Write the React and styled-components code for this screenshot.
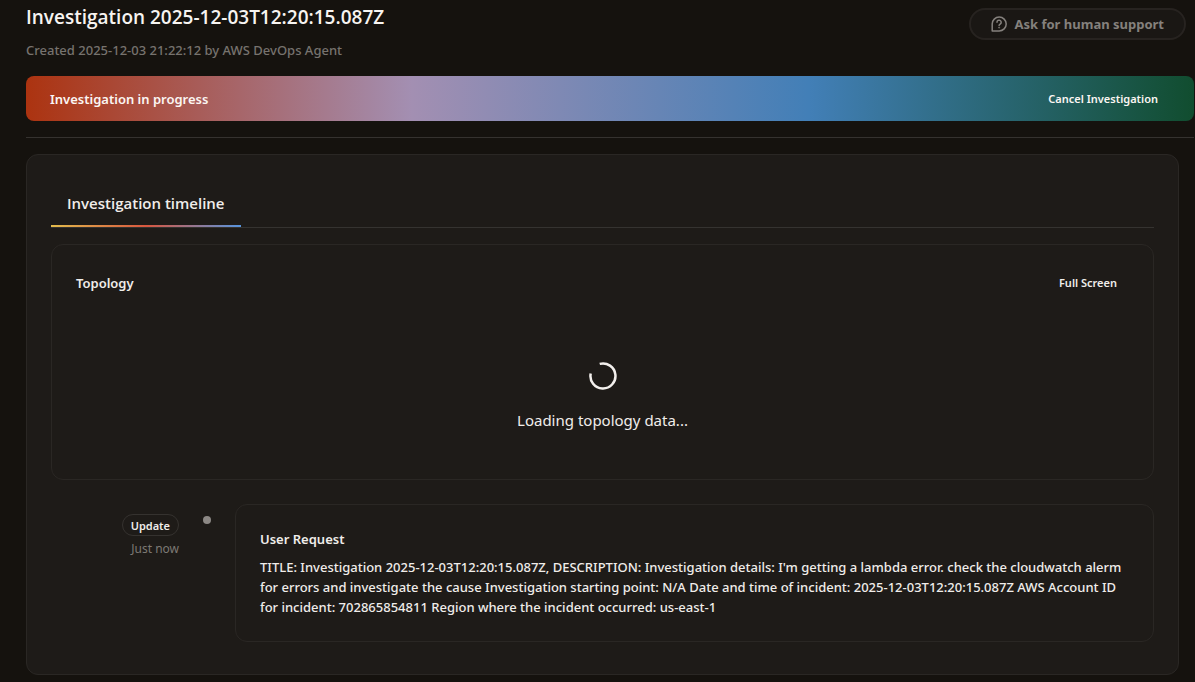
import React from "react";
import styled, { createGlobalStyle } from "styled-components";

const GlobalStyle = createGlobalStyle`
  *, *::before, *::after { box-sizing: border-box; }
  html { background: #15120e; }
  body {
    margin: 0;
    color: #f0edea;
    font-family: "Segoe UI", "Noto Sans", "Open Sans", sans-serif;
    font-size: 13px;
    line-height: 20px;
  }
  h1, h2, h3, p { margin: 0; }
  button {
    padding: 0;
    border: 0;
    background: none;
    color: inherit;
    font: inherit;
    cursor: pointer;
  }
`;

const Page = styled.main`
  padding: 4px 1px 6px 26px;
`;

const Header = styled.header`
  display: flex;
  justify-content: space-between;
  align-items: flex-start;
  padding: 0 8px 16px 0;
`;

const Heading = styled.div`
  display: flex;
  flex-direction: column;
  gap: 10px;
`;

const Title = styled.h1`
  font-family: "Open Sans", "Noto Sans", sans-serif;
  font-size: 19px;
  line-height: 26px;
  font-weight: 600;
  color: #f7f4f1;
`;

const Meta = styled.p`
  font-weight: 500;
  color: #77736e;
`;

const SupportButton = styled.button`
  display: flex;
  align-items: center;
  gap: 8px;
  height: 32px;
  margin-top: 4px;
  padding: 0 20px;
  border: 2px solid #272320;
  border-radius: 16px;
  background: #1a1714;
  color: #85817d;
  font-weight: 700;
`;

const Banner = styled.section`
  display: flex;
  justify-content: space-between;
  align-items: center;
  height: 45px;
  padding: 0 36px 0 24px;
  border-radius: 8px;
  background: linear-gradient(90deg, #ac3310 0%, #a38fb2 33%, #427fb7 67%, #114d2f 100%);
  font-weight: 600;
  color: #fbf6f3;
`;

const SmallButton = styled.button`
  font-size: 11px;
  font-weight: 600;
`;

const Divider = styled.hr`
  height: 1px;
  margin: 16px 0;
  border: 0;
  background: #35322f;
`;

const Card = styled.section`
  border: 1px solid #2a2724;
  border-radius: 12px;
  background: #1e1b18;
`;

const MainCard = styled(Card)`
  margin-right: 15px;
  padding: 24px 24px 32px;
`;

const Tabs = styled.div`
  display: flex;
  margin-bottom: 16px;
  border-bottom: 1px solid #353330;
`;

const Tab = styled.button`
  height: 48px;
  padding: 2px 16px 0;
  border-bottom: 2px solid;
  border-image: linear-gradient(90deg, #e3bd4c, #d9573f 50%, #5595e0) 1;
  font-family: "Open Sans", "Noto Sans", sans-serif;
  font-size: 15px;
  font-weight: 600;
`;

const TopologyCard = styled(Card)`
  min-height: 236px;
  margin-bottom: 24px;
  padding: 28px 36px 24px 24px;
`;

const CardHeader = styled.div`
  display: flex;
  justify-content: space-between;
  align-items: center;
`;

const CardTitle = styled.h2`
  font-size: 13px;
  line-height: 20px;
  font-weight: 600;
`;

const Loading = styled.div`
  display: flex;
  flex-direction: column;
  align-items: center;
  gap: 18px;
  margin: 69px -12px 0 0;
  font-size: 15px;
  line-height: 24px;
`;

const Entry = styled.article`
  display: grid;
  grid-template-columns: 128px 8px minmax(0, 1fr);
  column-gap: 24px;
`;

const Status = styled.div`
  display: flex;
  flex-direction: column;
  align-items: flex-end;
  gap: 4px;
  padding-top: 10px;
  font-size: 12px;
  line-height: 18px;
`;

const Badge = styled.span`
  height: 22px;
  padding: 0 8px;
  border: 1px solid #35322f;
  border-radius: 12px;
  font-size: 11px;
  line-height: 22px;
  font-weight: 600;
`;

const Time = styled.time`
  color: #7d7974;
`;

const Dot = styled.span`
  width: 8px;
  height: 8px;
  margin-top: 12px;
  border-radius: 50%;
  background: #8c8885;
`;

const RequestCard = styled(Card)`
  display: flex;
  flex-direction: column;
  gap: 8px;
  padding: 24px;
  min-height: 138px;
`;

const RequestText = styled.p`
  font-weight: 500;
`;

function SupportIcon() {
  return (
    <svg width="16" height="16" viewBox="0 0 16 16" fill="none" stroke="currentColor" strokeWidth="1.5" strokeLinejoin="round" aria-hidden="true">
      <path d="M1.2 15V8A7 6.9 0 1 1 8.2 14.9Z" />
      <path d="M6 6.300a2.100 2.100 0 1 1 3.400 1.600C8.600 8.500 8.100 8.700 8.100 9.600" strokeLinecap="round" />
      <circle cx="8.100" cy="11.600" r=".6" fill="currentColor" strokeWidth=".5" />
    </svg>
  );
}

function Spinner() {
  return (
    <svg width="28" height="28" viewBox="0 0 28 28" fill="none" stroke="#f3f0ed" strokeWidth="2.5" aria-hidden="true">
      <path d="M10.7 1.9A12.500 12.500 0 1 1 1.700 11.500" />
    </svg>
  );
}

export default function App() {
  return (
    <>
      <GlobalStyle />
      <Page>
        <Header>
          <Heading>
            <Title>Investigation 2025-12-03T12:20:15.087Z</Title>
            <Meta>Created 2025-12-03 21:22:12 by AWS DevOps Agent</Meta>
          </Heading>
          <SupportButton type="button">
            <SupportIcon />
            Ask for human support
          </SupportButton>
        </Header>
        <Banner>
          <span>Investigation in progress</span>
          <SmallButton type="button">Cancel Investigation</SmallButton>
        </Banner>
        <Divider />
        <MainCard>
          <Tabs role="tablist">
            <Tab type="button" role="tab" aria-selected="true">Investigation timeline</Tab>
          </Tabs>
          <TopologyCard>
            <CardHeader>
              <CardTitle>Topology</CardTitle>
              <SmallButton type="button">Full Screen</SmallButton>
            </CardHeader>
            <Loading role="status">
              <Spinner />
              <p>Loading topology data...</p>
            </Loading>
          </TopologyCard>
          <Entry>
            <Status>
              <Badge>Update</Badge>
              <Time>Just now</Time>
            </Status>
            <Dot />
            <RequestCard>
              <CardTitle>User Request</CardTitle>
              <RequestText>
                TITLE: Investigation 2025-12-03T12:20:15.087Z, DESCRIPTION: Investigation details: I'm getting a lambda error. check the cloudwatch alerm for errors and investigate the cause Investigation starting point: N/A Date and time of incident: 2025-12-03T12:20:15.087Z AWS Account ID for incident: 702865854811 Region where the incident occurred: us-east-1
              </RequestText>
            </RequestCard>
          </Entry>
        </MainCard>
      </Page>
    </>
  );
}
